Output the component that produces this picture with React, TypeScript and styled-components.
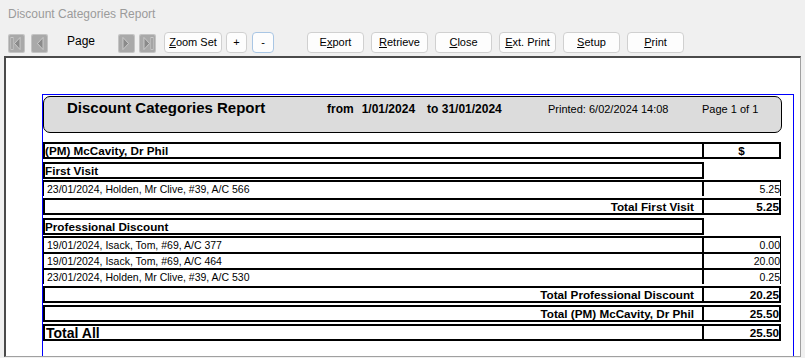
import styled, { createGlobalStyle, css } from "styled-components";

const GlobalStyle = createGlobalStyle`
  html, body {
    margin: 0;
    padding: 0;
    background: #f0f0f0;
  }
  * {
    box-sizing: border-box;
  }
`;

const Window = styled.div`
  width: 805px;
  height: 358px;
  background: #f0f0f0;
  display: flex;
  flex-direction: column;
  overflow: hidden;
  font-family: "Liberation Sans", Arial, sans-serif;
`;

const TitleBar = styled.div`
  height: 28px;
  padding-left: 8px;
  display: flex;
  align-items: center;
  font-size: 12px;
  color: #9b9b9b;
`;

const Toolbar = styled.div`
  height: 28px;
  padding-left: 8px;
  display: flex;
  align-items: center;
`;

const NavButton = styled.div<{ $gap: number }>`
  width: 17px;
  height: 19px;
  margin-left: ${p => p.$gap}px;
  margin-top: 2px;
  svg {
    display: block;
  }
`;

const PageLabel = styled.div`
  width: 51px;
  margin-left: 19px;
  font-size: 12px;
  color: #000;
  margin-top: -3px;
`;

const ToolButton = styled.div<{ $gap: number; $width: number; $focused?: boolean }>`
  width: ${p => p.$width}px;
  height: 21px;
  margin-left: ${p => p.$gap}px;
  border: 1px solid ${p => (p.$focused ? "#a9c6e4" : "#d0d0d0")};
  border-radius: 4px;
  background: #fdfdfd;
  display: flex;
  align-items: center;
  justify-content: center;
  font-size: 11px;
  color: #000;
  u {
    text-decoration-thickness: 1px;
    text-underline-offset: 1px;
  }
`;

const Preview = styled.div`
  flex: 1;
  margin: 0 4px 1px 4px;
  border-top: 2px solid #4a4a4a;
  border-left: 2px solid #4a4a4a;
  border-right: 1px solid #a0a0a0;
  border-bottom: 1px solid #a0a0a0;
  background: #fff;
  overflow: hidden;
  padding: 36px 6px 0 36px;
  display: flex;
  flex-direction: column;
`;

const Frame = styled.div`
  flex: 1;
  border: 1px solid #0000ff;
  border-bottom: none;
  padding-top: 1px;
`;

const Header = styled.div`
  width: 739px;
  height: 37px;
  border: 1px solid #000;
  border-radius: 7px;
  background: #dcdcdc;
  display: flex;
  align-items: baseline;
  padding: 2px 0 0 23px;
  color: #000;
`;

const ReportTitle = styled.span`
  width: 260px;
  font-size: 15px;
  font-weight: bold;
`;

const Range = styled.span`
  width: 221px;
  font-size: 12px;
  font-weight: bold;
  b + b {
    margin-left: 8px;
  }
`;

const RangeTo = styled.b`
  margin-left: 12px !important;
`;

const Info = styled.span<{ $width?: number }>`
  width: ${p => (p.$width ? `${p.$width}px` : "auto")};
  font-size: 11px;
`;

const Table = styled.div`
  padding-top: 6px;
`;

type Kind = "group" | "detail" | "total" | "grand";

const Row = styled.div<{ $kind: Kind; $first?: boolean }>`
  display: flex;
  height: ${p => (p.$kind === "detail" ? 16 : 17)}px;
  margin-top: ${p =>
    p.$kind === "group" ? 3 : p.$kind === "detail" ? (p.$first ? 1 : 0) : 2}px;
`;

const LabelCell = styled.div<{ $kind: Kind }>`
  width: 661px;
  display: flex;
  align-items: center;
  color: #000;
  white-space: nowrap;
  border: 2px solid #000;
  ${p =>
    p.$kind === "group" &&
    css`
      font-size: 11.7px;
      font-weight: bold;
    `}
  ${p =>
    p.$kind === "detail" &&
    css`
      border-bottom: none;
      border-left-width: 1px;
      padding-left: 3px;
      font-size: 10.5px;
    `}
  ${p =>
    p.$kind === "total" &&
    css`
      justify-content: flex-end;
      padding-right: 8px;
      font-size: 11.7px;
      font-weight: bold;
    `}
  ${p =>
    p.$kind === "grand" &&
    css`
      padding-left: 1px;
      font-size: 14px;
      font-weight: bold;
    `}
`;

const ValueCell = styled.div<{ $kind: Kind; $center?: boolean }>`
  width: 77px;
  display: flex;
  align-items: center;
  justify-content: ${p => (p.$center ? "center" : "flex-end")};
  color: #000;
  border: 2px solid #000;
  border-left: none;
  font-size: ${p => (p.$kind === "detail" ? "10.5px" : "11.7px")};
  font-weight: ${p => (p.$kind === "detail" ? "normal" : "bold")};
  ${p =>
    p.$kind === "detail" &&
    css`
      border-bottom: none;
      border-right-width: 1px;
    `}
`;

type NavKind = "first" | "prev" | "next" | "last";

function NavIcon({ kind }: { kind: NavKind }) {
  const left = kind === "first" || kind === "prev";
  const bar = kind === "first" || kind === "last";
  const tri = left ? "12,3.5 6.5,9.5 12,15.5" : "5,3.5 10.5,9.5 5,15.5";
  const barX = kind === "first" ? 3 : 12;
  return (
    <svg width="17" height="19" viewBox="0 0 17 19">
      <rect x="0" y="0" width="17" height="19" rx="2" fill="#c4c4c4" />
      <rect x="1" y="1" width="15" height="17" rx="1.5" fill="#a9a9a9" />
      {bar && <rect x={barX} y="3.5" width="2" height="12" fill="#8a8a8a" stroke="#d6d6d6" strokeWidth="0.7" />}
      <polygon points={tri} fill="#8a8a8a" stroke="#d6d6d6" strokeWidth="0.8" strokeLinejoin="round" />
    </svg>
  );
}

const actions = [
  { text: "Export", u: 1 },
  { text: "Retrieve", u: 0 },
  { text: "Close", u: 0 },
  { text: "Ext. Print", u: 0 },
  { text: "Setup", u: 0 },
  { text: "Print", u: 0 },
];

function Mnemonic({ text, u }: { text: string; u: number }) {
  return (
    <span>
      {text.slice(0, u)}
      <u>{text[u]}</u>
      {text.slice(u + 1)}
    </span>
  );
}

interface ReportRow {
  kind: Kind;
  label: string;
  value?: string;
  first?: boolean;
}

const rows: ReportRow[] = [
  { kind: "group", label: "(PM) McCavity, Dr Phil", value: "$" },
  { kind: "group", label: "First Visit" },
  { kind: "detail", label: "23/01/2024, Holden, Mr Clive, #39, A/C 566", value: "5.25", first: true },
  { kind: "total", label: "Total First Visit", value: "5.25" },
  { kind: "group", label: "Professional Discount" },
  { kind: "detail", label: "19/01/2024, Isack, Tom, #69, A/C 377", value: "0.00", first: true },
  { kind: "detail", label: "19/01/2024, Isack, Tom, #69, A/C 464", value: "20.00" },
  { kind: "detail", label: "23/01/2024, Holden, Mr Clive, #39, A/C 530", value: "0.25" },
  { kind: "total", label: "Total Professional Discount", value: "20.25" },
  { kind: "total", label: "Total (PM) McCavity, Dr Phil", value: "25.50" },
  { kind: "grand", label: "Total All", value: "25.50" },
];

export default function App() {
  return (
    <>
      <GlobalStyle />
      <Window>
        <TitleBar>Discount Categories Report</TitleBar>
        <Toolbar>
          <NavButton $gap={0}>
            <NavIcon kind="first" />
          </NavButton>
          <NavButton $gap={6}>
            <NavIcon kind="prev" />
          </NavButton>
          <PageLabel>Page</PageLabel>
          <NavButton $gap={0}>
            <NavIcon kind="next" />
          </NavButton>
          <NavButton $gap={4}>
            <NavIcon kind="last" />
          </NavButton>
          <ToolButton $gap={8} $width={58}>
            <Mnemonic text="Zoom Set" u={0} />
          </ToolButton>
          <ToolButton $gap={4} $width={21}>+</ToolButton>
          <ToolButton $gap={5} $width={22} $focused>
            -
          </ToolButton>
          {actions.map((a, i) => (
            <ToolButton key={a.text} $gap={i === 0 ? 33 : 7} $width={57}>
              <Mnemonic text={a.text} u={a.u} />
            </ToolButton>
          ))}
        </Toolbar>
        <Preview>
          <Frame>
            <Header>
              <ReportTitle>Discount Categories Report</ReportTitle>
              <Range>
                <b>from</b>
                <b>1/01/2024</b>
                <RangeTo>to 31/01/2024</RangeTo>
              </Range>
              <Info $width={154}>Printed: 6/02/2024 14:08</Info>
              <Info>Page 1 of 1</Info>
            </Header>
            <Table>
              {rows.map((r, i) => (
                <Row key={i} $kind={r.kind} $first={r.first}>
                  <LabelCell $kind={r.kind}>{r.label}</LabelCell>
                  {r.value && (
                    <ValueCell $kind={r.kind} $center={r.value === "$"}>
                      {r.value}
                    </ValueCell>
                  )}
                </Row>
              ))}
            </Table>
          </Frame>
        </Preview>
      </Window>
    </>
  );
}
